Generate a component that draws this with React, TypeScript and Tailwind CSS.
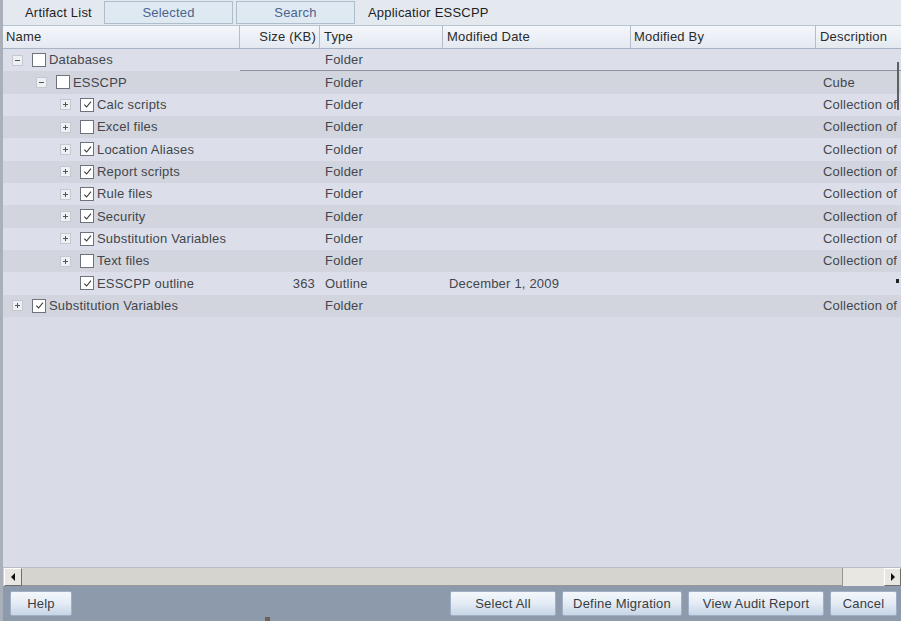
import React from "react";

type Row = {
  name: string;
  level: number;
  expander: "plus" | "minus" | null;
  checked: boolean;
  size?: string;
  type: string;
  date?: string;
  desc?: string;
};

const rows: Row[] = [
  { name: "Databases", level: 0, expander: "minus", checked: false, type: "Folder" },
  { name: "ESSCPP", level: 1, expander: "minus", checked: false, type: "Folder", desc: "Cube" },
  { name: "Calc scripts", level: 2, expander: "plus", checked: true, type: "Folder", desc: "Collection of" },
  { name: "Excel files", level: 2, expander: "plus", checked: false, type: "Folder", desc: "Collection of" },
  { name: "Location Aliases", level: 2, expander: "plus", checked: true, type: "Folder", desc: "Collection of" },
  { name: "Report scripts", level: 2, expander: "plus", checked: true, type: "Folder", desc: "Collection of" },
  { name: "Rule files", level: 2, expander: "plus", checked: true, type: "Folder", desc: "Collection of" },
  { name: "Security", level: 2, expander: "plus", checked: true, type: "Folder", desc: "Collection of" },
  { name: "Substitution Variables", level: 2, expander: "plus", checked: true, type: "Folder", desc: "Collection of" },
  { name: "Text files", level: 2, expander: "plus", checked: false, type: "Folder", desc: "Collection of" },
  { name: "ESSCPP outline", level: 2, expander: null, checked: true, size: "363", type: "Outline", date: "December 1, 2009" },
  { name: "Substitution Variables", level: 0, expander: "plus", checked: true, type: "Folder", desc: "Collection of" },
];

const cols = "grid grid-cols-[237px_80px_123px_188px_185px_1fr]";

function Expander({ kind }: { kind: "plus" | "minus" }) {
  return (
    <span className="flex h-[11px] w-[11px] shrink-0 items-center justify-center border border-[#c4c8d0] bg-[#eef0f4]">
      <svg viewBox="0 0 9 9" className="h-[9px] w-[9px]">
        <path d="M2 4.5h5" stroke="#555" strokeWidth="1" />
        {kind === "plus" && <path d="M4.5 2v5" stroke="#555" strokeWidth="1" />}
      </svg>
    </span>
  );
}

function Checkbox({ checked }: { checked: boolean }) {
  return (
    <span className="flex h-[14px] w-[14px] shrink-0 items-center justify-center border border-[#6d727b] bg-white">
      {checked && (
        <svg viewBox="0 0 12 12" className="h-[11px] w-[11px]">
          <path d="M2.5 6.2 L5 8.7 L9.8 2.8" fill="none" stroke="#3a3a3a" strokeWidth="1.2" />
        </svg>
      )}
    </span>
  );
}

function Button({ label, className = "" }: { label: string; className?: string }) {
  return (
    <button
      className={`flex h-[25px] items-center justify-center rounded-[2px] border border-[#9fb0c6] bg-gradient-to-b from-[#f4f8fc] via-[#e3ebf5] to-[#c7d5e6] text-[13px] text-[#3a3d42] ${className}`}
    >
      {label}
    </button>
  );
}

export default function App() {
  return (
    <div
      className="relative flex h-[621px] w-[901px] flex-col overflow-hidden border-l-[3px] border-[#a9b0ba] bg-[#d9dce6] text-[13px] tracking-[0.2px] text-[#43464c]"
      style={{ fontFamily: '"Liberation Sans", Arial, sans-serif' }}
    >
      {/* tab strip */}
      <div className="flex h-[26px] shrink-0 items-center border-b border-[#b7c1cf] bg-[#e4e9f0]">
        <span className="w-[101px] pl-[22px] text-[#1e1e1e]">Artifact List</span>
        <span className="flex h-[23px] w-[129px] items-center justify-center border border-[#aebccc] bg-[#dfe9f2] text-[#4a6490]">
          Selected
        </span>
        <span className="ml-[3px] flex h-[23px] w-[119px] items-center justify-center border border-[#aebccc] bg-[#dfe9f2] text-[#4a6490]">
          Search
        </span>
        <span className="pl-[13px] text-[#1e1e1e]">Applicatior ESSCPP</span>
      </div>

      {/* column header */}
      <div className={`${cols} h-[23px] shrink-0 border-b border-[#a8b4c5] bg-gradient-to-b from-[#f4f7fb] to-[#e4e9f1] text-[#2a2a2a]`}>
        <div className="flex items-center border-r border-[#b3bdcb] pl-[3px]">Name</div>
        <div className="flex items-center justify-end border-r border-[#b3bdcb] pr-[3px]">Size (KB)</div>
        <div className="flex items-center border-r border-[#b3bdcb] pl-[4px]">Type</div>
        <div className="flex items-center border-r border-[#b3bdcb] pl-[4px]">Modified Date</div>
        <div className="flex items-center border-r border-[#b3bdcb] pl-[3px]">Modified By</div>
        <div className="flex items-center pl-[4px]">Description</div>
      </div>

      {/* rows */}
      <div className="shrink-0">
        {rows.map((row, i) => (
          <div
            key={i}
            className={`${cols} h-[22.33px] ${i % 2 === 0 ? "bg-[#dcdfe9]" : "bg-[#d2d5de]"}`}
          >
            <div
              className="flex items-center"
              style={{ paddingLeft: 9 + row.level * 24 }}
            >
              {row.expander ? (
                <Expander kind={row.expander} />
              ) : (
                <span className="w-[11px] shrink-0" />
              )}
              <span className="ml-[9px]">
                <Checkbox checked={row.checked} />
              </span>
              <span className="ml-[3px] whitespace-nowrap">{row.name}</span>
            </div>
            <div className={`flex items-center justify-end pr-[5px] ${i === 0 ? "border-b border-[#8f949c]" : ""}`}>
              {row.size}
            </div>
            <div className={`flex items-center pl-[5px] ${i === 0 ? "border-b border-[#8f949c]" : ""}`}>{row.type}</div>
            <div className={`flex items-center pl-[6px] ${i === 0 ? "border-b border-[#8f949c]" : ""}`}>{row.date}</div>
            <div className={`${i === 0 ? "border-b border-[#8f949c]" : ""}`} />
            <div className={`flex items-center overflow-hidden whitespace-nowrap pl-[7px] ${i === 0 ? "border-b border-[#8f949c]" : ""}`}>
              {row.desc}
            </div>
          </div>
        ))}
      </div>

      <div className="flex-1" />

      {/* horizontal scrollbar */}
      <div className="flex h-[19px] shrink-0 items-stretch border-t border-[#b8bcc4] bg-[#d6d4ce] pl-[1px]">
        <div className="flex w-[18px] items-center justify-center border border-[#fff] border-r-[#6e6e6e] border-b-[#6e6e6e] bg-[#e8e6e1]">
          <svg viewBox="0 0 6 8" className="h-[8px] w-[6px]">
            <path d="M5 0 L1 4 L5 8Z" fill="#111" />
          </svg>
        </div>
        <div className="flex-1 border-b border-[#9a9892]" />
        <div className="w-[42px] border-l border-[#9a9892] bg-[#e9e7e2]" />
        <div className="flex w-[17px] items-center justify-center border border-[#fff] border-r-[#6e6e6e] border-b-[#6e6e6e] bg-[#e8e6e1]">
          <svg viewBox="0 0 6 8" className="h-[8px] w-[6px]">
            <path d="M1 0 L5 4 L1 8Z" fill="#111" />
          </svg>
        </div>
      </div>

      {/* button bar */}
      <div className="flex h-[35px] shrink-0 items-center bg-[#8d9aab] pl-[7px] pr-[4px]">
        <Button label="Help" className="w-[62px]" />
        <div className="flex-1" />
        <div className="flex gap-[6px]">
          <Button label="Select All" className="w-[106px]" />
          <Button label="Define Migration" className="w-[120px]" />
          <Button label="View Audit Report" className="w-[136px]" />
          <Button label="Cancel" className="w-[67px]" />
        </div>
      </div>

      {/* stray edge marks */}
      <div className="absolute right-[1px] top-[62px] h-[48px] w-[3px] border-l-2 border-[#5f6064]" />
      <div className="absolute right-[2px] top-[279px] h-[4px] w-[3px] bg-[#222]" />
      <div className="absolute bottom-0 left-[262px] h-[4px] w-[5px] bg-[#6d6254]" />
    </div>
  );
}
